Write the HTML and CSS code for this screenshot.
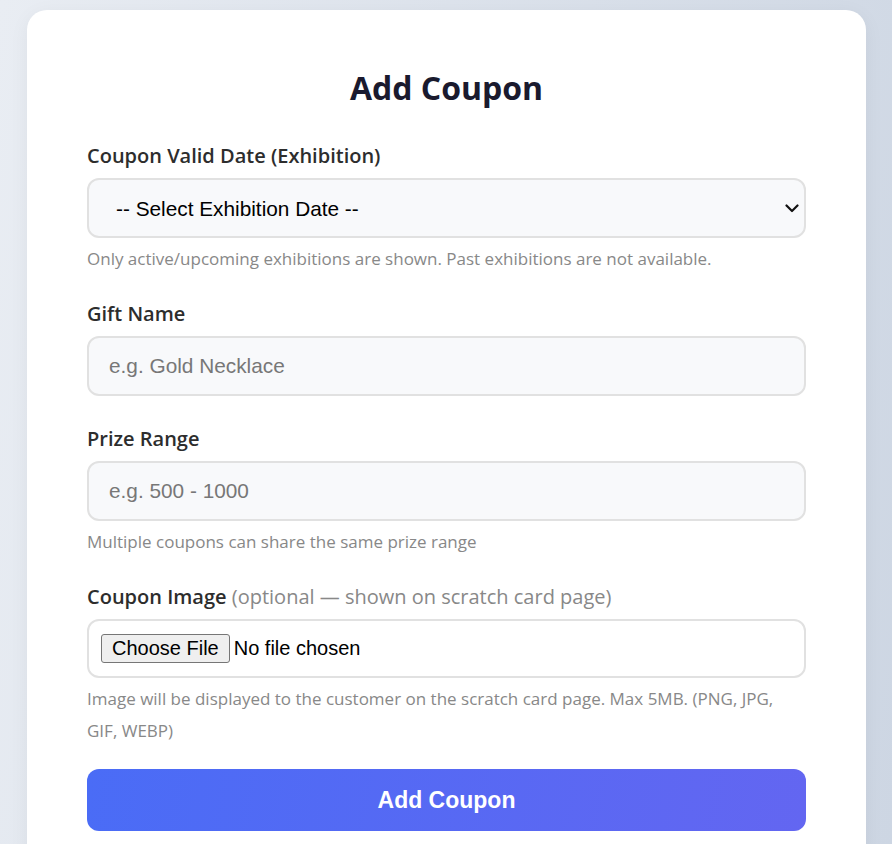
FILE: index.html
```html
<!DOCTYPE html>
<html lang="en">
  <head>
    <title>Add Coupon</title>
    <link rel="stylesheet" href="styles.css">
  </head>

  <body>
    <div class="Page">
      <div class="Card">
        <h2>Add Coupon</h2>

        <form id="form">
          <!-- Exhibition date -->
          <div class="field">
            <label for="exhibition">Coupon Valid Date (Exhibition)</label>
            <div class="selectWrap">
              <select id="exhibition">
                <option value="">-- Select Exhibition Date --</option>
              </select>
              <svg class="chevron" width="14" height="9" viewBox="0 0 14 9">
                <path d="M1.5 1.5 L7 7 L12.5 1.5" fill="none" stroke="#111" stroke-width="2.2" stroke-linecap="round" stroke-linejoin="round"/>
              </svg>
            </div>
            <p class="hint">Only active/upcoming exhibitions are shown. Past exhibitions are not available.</p>
          </div>

          <!-- Gift name -->
          <div class="field">
            <label for="gift">Gift Name</label>
            <input type="text" id="gift" placeholder="e.g. Gold Necklace" />
          </div>

          <!-- Prize range -->
          <div class="field">
            <label for="range">Prize Range</label>
            <input type="text" id="range" placeholder="e.g. 500 - 1000" />
            <p class="hint">Multiple coupons can share the same prize range</p>
          </div>

          <!-- Image -->
          <div class="field last">
            <label for="image">Coupon Image <span class="optional">(optional — shown on scratch card page)</span></label>
            <input type="file" id="image" />
            <p class="hint">Image will be displayed to the customer on the scratch card page. Max 5MB. (PNG, JPG, GIF, WEBP)</p>
          </div>

          <button type="submit">Add Coupon</button>
        </form>
      </div>
    </div>
  </body>
</html>
```

FILE: styles.css
```css
html,
body {
  margin: 0;
  height: 100%;
}

body {
  background: linear-gradient(100deg, #e9edf3 0%, #cdd6e3 100%);
  font-family: "Open Sans", "Noto Sans", sans-serif;
}

.Page {
  padding: 10px 26px 0 27px;
}

.Card {
  background: #ffffff;
  border-radius: 20px;
  padding: 50px 60px 40px;
  box-shadow: 0 4px 20px rgba(0, 0, 0, 0.05);
}

.Card h2 {
  margin: 0 0 28px;
  text-align: center;
  font-size: 32px;
  font-weight: 700;
  line-height: 55px;
  color: #1a1a2e;
}

.field {
  margin-bottom: 30px;
}

.field.last {
  margin-bottom: 26px;
}

.field label {
  display: block;
  font-size: 20px;
  font-weight: 600;
  line-height: 26px;
  color: #2d2d2d;
  margin-bottom: 9px;
}

.field .optional {
  font-weight: 400;
  color: #888888;
}

.selectWrap {
  position: relative;
}

.selectWrap .chevron {
  position: absolute;
  right: 7px;
  top: 26px;
  pointer-events: none;
}

.field select,
.field input {
  display: block;
  box-sizing: border-box;
  width: 100%;
  height: 60px;
  padding: 0 20px;
  border: 2px solid #e1e1e1;
  border-radius: 12px;
  background: #f8f9fb;
  font-family: "Liberation Sans", Arial, sans-serif;
  font-size: 20.8px;
  color: #000000;
}

.field select {
  appearance: none;
  padding-left: 27px;
}

.field input::placeholder {
  color: #777777;
}

.field input[type="file"] {
  height: 59px;
  padding: 0 12px;
  background: #ffffff;
  font-size: 20px;
  line-height: 55px;
}

.field input[type="file"]::file-selector-button {
  font-family: "Liberation Sans", Arial, sans-serif;
  font-size: 20px;
  padding: 2px 10px;
  margin-right: 4px;
  border: 1px solid #767676;
  border-radius: 3px;
  background: #efefef;
}

.hint {
  margin: 5px 0 -4px;
  font-size: 17px;
  line-height: 32px;
  color: #888888;
}

.Card button {
  display: block;
  width: 100%;
  height: 62px;
  border: none;
  border-radius: 12px;
  background: linear-gradient(100deg, #4a6cf6 0%, #6366f1 100%);
  color: #ffffff;
  font-family: "Liberation Sans", Arial, sans-serif;
  font-size: 23px;
  font-weight: 700;
  cursor: pointer;
}
```
